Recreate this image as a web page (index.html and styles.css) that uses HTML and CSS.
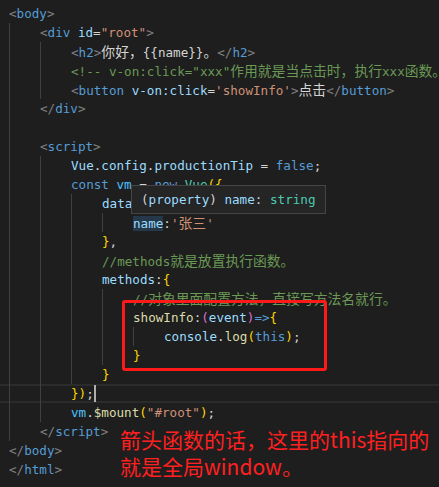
FILE: index.html
```html
<!DOCTYPE html>
<html>
<head>
    <meta charset="UTF-8">
    <title>Vue this</title>
    <link rel="stylesheet" href="styles.css">
</head>
<body>
    <div class="editor">
        <div class="code">
            <div class="line"><span class="p">&lt;</span><span class="tag">body</span><span class="p">&gt;</span></div>
            <div class="line"><span class="ind l1"></span><span class="p">&lt;</span><span class="tag">div</span> <span class="attr">id</span>=<span class="str">"root"</span><span class="p">&gt;</span></div>
            <div class="line"><span class="ind l2"></span><span class="p">&lt;</span><span class="tag">h2</span><span class="p">&gt;</span><span class="zh">你好，</span>{{name}}<span class="zh">。</span><span class="p">&lt;/</span><span class="tag">h2</span><span class="p">&gt;</span></div>
            <div class="line"><span class="ind l2"></span><span class="com">&lt;!-- v-on:click="xxx"<span class="zh">作用就是当点击时，执行</span>xxx<span class="zh">函数。</span></span></div>
            <div class="line"><span class="ind l2"></span><span class="p">&lt;</span><span class="tag">button</span> <span class="attr">v-on:click</span>=<span class="str">'showInfo'</span><span class="p">&gt;</span><span class="zh">点击</span><span class="p">&lt;/</span><span class="tag">button</span><span class="p">&gt;</span></div>
            <div class="line"><span class="ind l1"></span><span class="p">&lt;/</span><span class="tag">div</span><span class="p">&gt;</span></div>
            <div class="line"><span class="ind l1"></span></div>
            <div class="line"><span class="ind l1"></span><span class="p">&lt;</span><span class="tag">script</span><span class="p">&gt;</span></div>
            <div class="line"><span class="ind l2"></span><span class="var">Vue</span>.<span class="var">config</span>.<span class="var">productionTip</span> = <span class="kw">false</span>;</div>
            <div class="line"><span class="ind l2"></span><span class="kw">const</span> <span class="const">vm</span> = <span class="kw">new</span> <span class="cls">Vue</span><span class="br">({</span></div>
            <div class="line"><span class="ind l3"></span><span class="var">data</span>:<span class="br">{</span></div>
            <div class="line"><span class="ind l4"></span><span class="var hl">name</span>:<span class="str">'<span class="zh">张三</span>'</span></div>
            <div class="line"><span class="ind l3"></span><span class="br">}</span>,</div>
            <div class="line"><span class="ind l3"></span><span class="com">//methods<span class="zh">就是放置执行函数。</span></span></div>
            <div class="line"><span class="ind l3"></span><span class="var">methods</span>:<span class="br">{</span></div>
            <div class="line"><span class="ind l4"></span><span class="com">//<span class="zh">对象里面配置方法，直接写方法名就行。</span></span></div>
            <div class="line"><span class="ind l4"></span><span class="fn">showInfo</span>:<span class="br2">(</span><span class="var">event</span><span class="br2">)</span><span class="kw">=&gt;</span><span class="br">{</span></div>
            <div class="line"><span class="ind l5"></span><span class="var">console</span>.<span class="fn">log</span><span class="br">(</span><span class="kw">this</span><span class="br">)</span>;</div>
            <div class="line"><span class="ind l4"></span><span class="br">}</span></div>
            <div class="line"><span class="ind l3"></span><span class="br">}</span></div>
            <div class="line current"><span class="ind l2"></span><span class="br">})</span>;<span class="caret"></span></div>
            <div class="line"><span class="ind l2"></span><span class="const">vm</span>.<span class="fn">$mount</span><span class="br">(</span><span class="str">"#root"</span><span class="br">)</span>;</div>
            <div class="line"><span class="ind l1"></span><span class="p">&lt;/</span><span class="tag">script</span><span class="p">&gt;</span></div>
            <div class="line"><span class="p">&lt;/</span><span class="tag">body</span><span class="p">&gt;</span></div>
            <div class="line"><span class="p">&lt;/</span><span class="tag">html</span><span class="p">&gt;</span></div>
        </div>

        <!-- hover tooltip over the code -->
        <div class="hover"><span class="p2">(</span><span class="var">property</span><span class="p2">)</span> <span class="var">name</span>: <span class="cls">string</span></div>

        <!-- annotation drawn over the screenshot -->
        <div class="mark"></div>
        <div class="note">
            <div>箭头函数的话，这里的this指向的</div>
            <div>就是全局window。</div>
        </div>
    </div>
</body>
</html>
```

FILE: styles.css
```css
body {
    margin: 0;
    background: #1e1e1e;
    overflow: hidden;
}
.editor {
    position: relative;
    width: 439px;
    height: 487px;
    overflow: hidden;
}
.code {
    padding: 4px 0 0 9px;
    font-family: "DejaVu Sans Mono", "Noto Sans CJK SC", monospace;
    font-size: 12.6px;
    color: #d4d4d4;
}
.line {
    height: 19px;
    line-height: 19px;
    white-space: pre;
}
.line.current {
    margin-left: -9px;
    padding-left: 9px;
    box-shadow: inset 0 2px #2b2b2b, inset 0 -2px #2b2b2b;
}
.ind {
    display: inline-block;
    height: 19px;
    vertical-align: top;
    background: repeating-linear-gradient(90deg, #404040 0 1px, transparent 1px 31px);
}
.l1 { width: 31px; }
.l2 { width: 62px; }
.l3 { width: 93px; }
.l4 { width: 124px; }
.l5 { width: 155px; }
.zh {
    font-family: "Noto Sans CJK SC", sans-serif;
    font-size: 13.8px;
    line-height: 19px;
}
.p { color: #808080; }
.tag { color: #569cd6; }
.attr { color: #9cdcfe; }
.str { color: #ce9178; }
.com { color: #6a9955; }
.kw { color: #569cd6; }
.var { color: #9cdcfe; }
.const { color: #4fc1ff; }
.cls { color: #4ec9b0; }
.fn { color: #dcdcaa; }
.br { color: #ffd700; }
.br2 { color: #da70d6; }
.hl { background: #25384a; }
.caret {
    display: inline-block;
    width: 2px;
    height: 17px;
    vertical-align: top;
    margin-top: 1px;
    background: #aeafad;
}
.hover {
    position: absolute;
    left: 131px;
    top: 185px;
    width: 175px;
    height: 27px;
    padding: 0 9px;
    background: #252526;
    border: 1px solid #454545;
    font-family: "DejaVu Sans Mono", monospace;
    font-size: 12.6px;
    line-height: 27px;
    color: #d4d4d4;
    white-space: pre;
}
.p2 { color: #d4d4d4; }
.mark {
    position: absolute;
    left: 122px;
    top: 300px;
    width: 199px;
    height: 65px;
    border: 3px solid #ff1a1a;
    border-radius: 3px;
}
.note {
    position: absolute;
    left: 120px;
    top: 426px;
    font-family: "Noto Sans CJK SC", sans-serif;
    font-size: 21px;
    line-height: 27px;
    color: #ff2020;
    white-space: nowrap;
}
```
